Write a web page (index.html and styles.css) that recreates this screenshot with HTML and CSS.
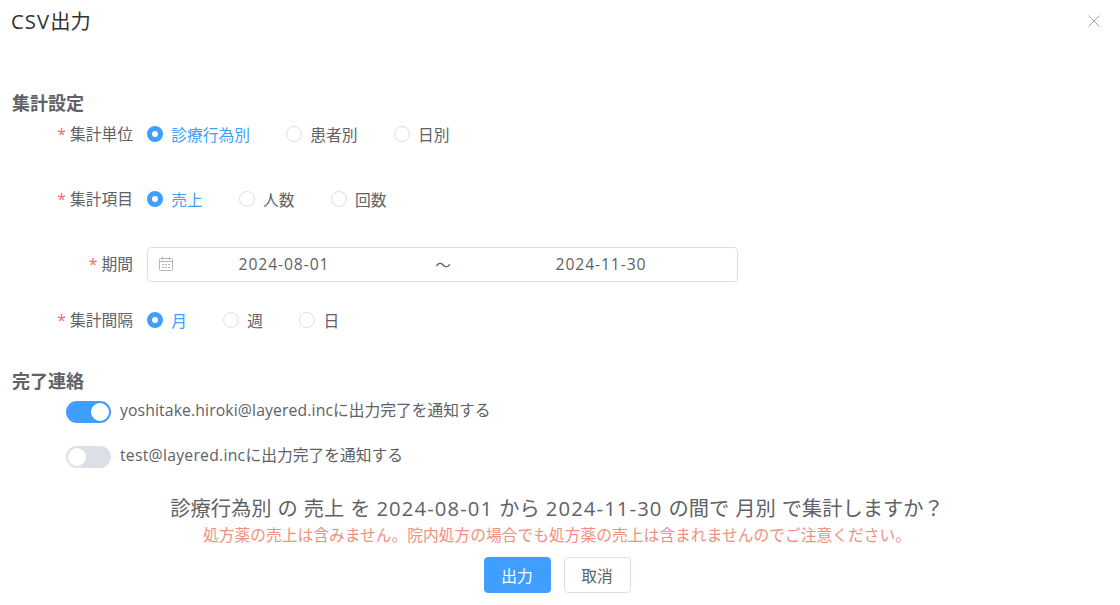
FILE: index.html
```html
<!DOCTYPE html>
<html lang="ja">
<head>
<meta charset="utf-8">
<title>CSV出力</title>
<link rel="stylesheet" href="styles.css">
</head>
<body>
<div class="dialog">
  <header class="dialog-header">
    <h1 class="dialog-title"><span class="title-latin">CSV</span>出力</h1>
    <button class="close" aria-label="閉じる">
      <svg width="12" height="12" viewBox="0 0 12 12"><path d="M0.5 0.5L11.5 11.5M11.5 0.5L0.5 11.5" stroke="#a3a6ad" stroke-width="1" fill="none"/></svg>
    </button>
  </header>

  <section class="section-settings">
    <h2 class="section-title">集計設定</h2>
    <div class="form-row row-unit">
      <div class="form-label"><span class="req">*</span>集計単位</div>
      <div class="radio-group">
        <label class="radio checked gap-a"><span class="dot"></span>診療行為別</label>
        <label class="radio gap-a"><span class="dot"></span>患者別</label>
        <label class="radio"><span class="dot"></span>日別</label>
      </div>
    </div>
    <div class="form-row row-item">
      <div class="form-label"><span class="req">*</span>集計項目</div>
      <div class="radio-group">
        <label class="radio checked gap-a"><span class="dot"></span>売上</label>
        <label class="radio gap-a"><span class="dot"></span>人数</label>
        <label class="radio"><span class="dot"></span>回数</label>
      </div>
    </div>
    <div class="form-row row-period">
      <div class="form-label"><span class="req">*</span>期間</div>
      <div class="date-range">
        <svg class="cal" width="14" height="14" viewBox="0 0 14 14" fill="none" stroke="#b4b6bb" stroke-width="1"><rect x="0.5" y="1.5" width="13" height="12" rx="1"/><path d="M0.5 4.5h13M3.5 0v3M10.5 0v3"/><path d="M3 7.5h2M6 7.5h2M9 7.5h2M3 10.5h2M6 10.5h2M9 10.5h2"/></svg>
        <span class="date-value date-start num">2024-08-01</span>
        <span class="date-sep">〜</span>
        <span class="date-value date-end num">2024-11-30</span>
      </div>
    </div>
    <div class="form-row row-interval">
      <div class="form-label"><span class="req">*</span>集計間隔</div>
      <div class="radio-group">
        <label class="radio checked gap-a"><span class="dot"></span>月</label>
        <label class="radio gap-a"><span class="dot"></span>週</label>
        <label class="radio"><span class="dot"></span>日</label>
      </div>
    </div>
  </section>

  <section class="section-notify">
    <h2 class="section-title">完了連絡</h2>
    <div class="switch-row first">
      <span class="switch on"><span class="knob"></span></span>
      <span class="switch-text"><span class="mail-long">yoshitake.hiroki@layered.inc</span>に出力完了を通知する</span>
    </div>
    <div class="switch-row">
      <span class="switch"><span class="knob"></span></span>
      <span class="switch-text"><span class="mail-short">test@layered.inc</span>に出力完了を通知する</span>
    </div>
  </section>

  <footer class="confirm">
    <p class="summary">診療行為別 の 売上 を <span class="num">2024-08-01</span> から <span class="num">2024-11-30</span> の間で 月別 で集計しますか？</p>
    <p class="warning">処方薬の売上は含みません。院内処方の場合でも処方薬の売上は含まれませんのでご注意ください。</p>
    <div class="actions">
      <button class="btn primary">出力</button>
      <button class="btn">取消</button>
    </div>
  </footer>
</div>
</body>
</html>
```
FILE: styles.css
```css
* { box-sizing: border-box; }
html, body { margin: 0; padding: 0; background: #fff; }
body {
  width: 1120px;
  height: 605px;
  overflow: hidden;
  font-family: "Open Sans", "Noto Sans CJK JP", sans-serif;
  color: #606266;
}
.dialog { display: flex; flex-direction: column; padding: 7px 0 0 0; }
.dialog-header {
  display: flex;
  justify-content: space-between;
  align-items: center;
  height: 28px;
  padding: 0 20px 0 11px;
}
.dialog-title { margin: 0; font-size: 20.25px; font-weight: 400; color: #303133; line-height: 28px; }
.title-latin { letter-spacing: 1.1px; }
.close { width: 12px; height: 12px; padding: 0; border: 0; background: none; display: flex; }
.section-settings { margin-top: 56px; }
.section-title {
  margin: 0;
  padding-left: 12px;
  font-size: 18px;
  line-height: 24px;
  font-weight: 700;
  color: #606266;
}
.form-row { display: flex; align-items: center; height: 36px; }
.row-unit { margin-top: 1px; }
.row-item { margin-top: 29px; }
.row-period { margin-top: 29px; }
.row-interval { margin-top: 20px; }
.form-label {
  width: 147px;
  padding-right: 14px;
  text-align: right;
  font-size: 15.75px;
  line-height: 36px;
  white-space: nowrap;
}
.req { color: #f56c6c; margin-right: 4px; }
.radio-group { display: flex; align-items: center; }
.radio { display: flex; align-items: center; font-size: 15.75px; color: #606266; white-space: nowrap; }
.gap-a { margin-right: 36px; }
.dot {
  width: 16px;
  height: 16px;
  margin-right: 8.3px;
  border-radius: 50%;
  border: 1px solid #dcdfe6;
  background: #fff;
  flex: none;
}
.radio.checked { color: #409eff; }
.radio.checked .dot { border: 5px solid #409eff; }
.num { letter-spacing: 0.055em; }
.date-range {
  display: flex;
  align-items: center;
  width: 591px;
  height: 35px;
  padding-left: 11px;
  border: 1px solid #dcdfe6;
  border-radius: 4px;
  font-size: 15.75px;
}
.cal { flex: none; }
.date-value { text-align: center; flex: none; }
.date-start { width: 222px; }
.date-sep { width: 96px; text-align: center; color: #606266; }
.date-end { width: 220px; }
.section-notify { margin-top: 31px; }
.switch-row { display: flex; align-items: center; height: 22px; padding-left: 66px; margin-top: 23px; }
.switch-row.first { margin-top: 8px; }
.switch {
  position: relative;
  width: 45px;
  height: 22px;
  border-radius: 11px;
  background: #dcdfe6;
  flex: none;
}
.switch.on { background: #409eff; }
.knob {
  position: absolute;
  top: 2px;
  left: 2px;
  width: 18px;
  height: 18px;
  border-radius: 50%;
  background: #fff;
}
.switch.on .knob { left: 25px; }
.switch-text { margin: 0 0 5px 9px; font-size: 15.75px; white-space: nowrap; }
.mail-long { letter-spacing: 0.12px; }
.mail-short { letter-spacing: 0.25px; }
.confirm { margin-top: 26px; padding-right: 6px; display: flex; flex-direction: column; align-items: center; }
.summary { margin: 0; font-size: 20.25px; line-height: 28px; white-space: nowrap; word-spacing: 0.75px; }
.warning { margin: 0; font-size: 15.75px; line-height: 26px; color: #f0907f; white-space: nowrap; }
.actions { display: flex; gap: 13px; margin-top: 9px; }
.btn {
  width: 67px;
  height: 36px;
  padding: 0;
  border: 1px solid #dcdfe6;
  border-radius: 4px;
  background: #fff;
  color: #606266;
  font: inherit;
  font-size: 15.75px;
}
.btn.primary { background: #409eff; border-color: #409eff; color: #fff; }
```
